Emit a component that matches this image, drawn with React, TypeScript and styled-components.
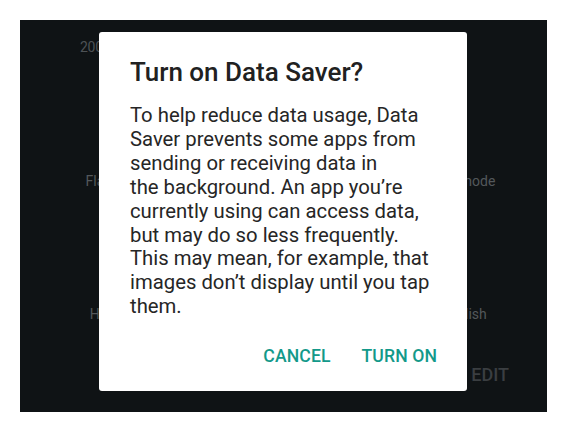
import styled, { createGlobalStyle } from "styled-components";

const GlobalStyle = createGlobalStyle`
  html, body {
    margin: 0;
    padding: 0;
    background: #ffffff;
  }
  body {
    font-family: Roboto, "Noto Sans", sans-serif;
  }
`;

const Page = styled.div`
  padding: 20px;
  width: 567px;
  height: 432px;
  box-sizing: border-box;
`;

const Screen = styled.div`
  position: relative;
  height: 392px;
  background: #0f1315;
  overflow: hidden;
  display: flex;
  flex-direction: column;
`;

const Header = styled.div`
  padding: 19px 0 0 60px;
  height: 40px;
  box-sizing: border-box;
  font-size: 14px;
  color: #4d5255;
  letter-spacing: -0.3px;
`;

const TileGrid = styled.div`
  display: grid;
  grid-template-columns: 1fr 1fr 1fr;
  grid-auto-rows: 133px;
  padding: 110px 0 0 0;
  margin-top: -112px;
`;

const Tile = styled.div<{ $shift: number }>`
  display: flex;
  align-items: flex-end;
  justify-content: center;
  font-size: 14px;
  color: #53585b;
  transform: translateX(${(p) => p.$shift}px);
`;

const TileLabel = styled.span`
  line-height: 20px;
`;

const Footer = styled.div`
  display: flex;
  justify-content: flex-end;
  padding: 0 38px 0 0;
  margin-top: auto;
  height: 47px;
`;

const EditButton = styled.span`
  font-size: 18px;
  font-weight: 500;
  color: #3a3e41;
  line-height: 20px;
`;

const Dialog = styled.div`
  position: absolute;
  left: 79px;
  top: 12px;
  width: 368px;
  height: 359px;
  box-sizing: border-box;
  background: #ffffff;
  border-radius: 3px;
  padding: 24px 30px 0 31px;
  display: flex;
  flex-direction: column;
`;

const Title = styled.h2`
  margin: 0;
  font-size: 26px;
  font-weight: 500;
  color: #212121;
  line-height: 32px;
`;

const Body = styled.p`
  margin: 16px 0 0 0;
  font-size: 20.3px;
  line-height: 23.9px;
  color: #262626;
  white-space: nowrap;
`;

const Actions = styled.div`
  display: flex;
  justify-content: flex-end;
  gap: 31px;
  margin-top: auto;
  padding-bottom: 25px;
`;

const ActionButton = styled.span`
  font-size: 17.6px;
  font-weight: 500;
  color: #13998a;
  letter-spacing: 0.1px;
`;

export default function App() {
  return (
    <>
      <GlobalStyle />
      <Page>
        <Screen>
          <Header>2000 MB</Header>
          <TileGrid>
            <Tile $shift={8}>
              <TileLabel>Flashlight</TileLabel>
            </Tile>
            <Tile $shift={0}>
              <TileLabel>Auto-rotate</TileLabel>
            </Tile>
            <Tile $shift={-9}>
              <TileLabel>Airplane mode</TileLabel>
            </Tile>
            <Tile $shift={7}>
              <TileLabel>Hotspot</TileLabel>
            </Tile>
            <Tile $shift={0}>
              <TileLabel>Location</TileLabel>
            </Tile>
            <Tile $shift={5}>
              <TileLabel>English</TileLabel>
            </Tile>
          </TileGrid>
          <Footer>
            <EditButton>EDIT</EditButton>
          </Footer>
          <Dialog>
            <Title>Turn on Data Saver?</Title>
            <Body>
              To help reduce data usage, Data
              <br />
              Saver prevents some apps from
              <br />
              sending or receiving data in
              <br />
              the background. An app you’re
              <br />
              currently using can access data,
              <br />
              but may do so less frequently.
              <br />
              This may mean, for example, that
              <br />
              images don’t display until you tap
              <br />
              them.
            </Body>
            <Actions>
              <ActionButton>CANCEL</ActionButton>
              <ActionButton>TURN ON</ActionButton>
            </Actions>
          </Dialog>
        </Screen>
      </Page>
    </>
  );
}
